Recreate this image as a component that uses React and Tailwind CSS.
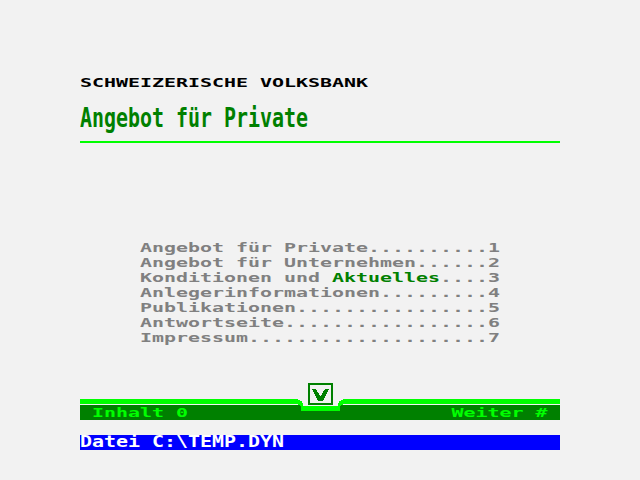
import React from "react";

const menu = [
  ["Angebot für Private..........1"],
  ["Angebot für Unternehmen......2"],
  ["Konditionen und ", "Aktuelles", "....3"],
  ["Anlegerinformationen.........4"],
  ["Publikationen................5"],
  ["Antwortseite.................6"],
  ["Impressum....................7"],
];

function Notch() {
  return (
    <svg
      className="absolute left-[216px] top-[-8px]"
      width="50"
      height="32"
      viewBox="0 0 50 32"
      shapeRendering="crispEdges"
    >
      <rect x="2" y="17" width="45" height="6" fill="#f2f2f2" />
      <rect x="6" y="23" width="37" height="1" fill="#f2f2f2" />
      <polygon
        fill="#00ff00"
        points="0,17 2,17 2,18 4,18 4,19 6,19 6,21 7,21 7,24 42,24 42,21 43,21 43,19 45,19 45,18 47,18 47,17 50,17 50,22 47,22 47,23 45,23 45,24 44,24 44,29 5,29 5,24 4,24 4,23 2,23 2,22 0,22"
      />
      <rect x="13" y="2" width="23" height="20" fill="#f2f2f2" stroke="#008000" strokeWidth="2" />
      <polygon fill="#008000" points="16,7 20,7 24.5,14.5 29,7 33,7 27,19 22,19" />
    </svg>
  );
}

export default function App() {
  return (
    <div className="w-[640px] h-[480px] bg-[#f2f2f2] overflow-hidden font-['DejaVu_Sans_Mono',monospace]">
      <div className="mx-[80px] w-[480px] flex flex-col pt-[75px]">
        <div className="h-[15px] text-[13px] leading-[15px] font-bold text-black whitespace-pre">
          <span className="block origin-left scale-x-[1.533]">SCHWEIZERISCHE VOLKSBANK</span>
        </div>
        <div className="h-[15px]" />
        <div className="h-[30px] text-[27px] leading-[25px] font-bold text-[#008000] whitespace-pre">
          <span className="block origin-left scale-x-[0.738]">Angebot für Private</span>
        </div>
        <div className="h-[6px]" />
        <div className="h-[2px] bg-[#00ff00]" />
        <div className="h-[97px]" />
        <div className="flex flex-col pl-[60px]">
          {menu.map((parts, i) => (
            <div key={i} className="h-[15px] text-[13px] leading-[15px] font-bold text-[#808080] whitespace-pre">
              <span className="block origin-left scale-x-[1.533]">
                {parts.length === 1 ? (
                  parts[0]
                ) : (
                  <>
                    {parts[0]}
                    <span className="text-[#008000]">{parts[1]}</span>
                    {parts[2]}
                  </>
                )}
              </span>
            </div>
          ))}
        </div>
        <div className="h-[45px]" />
        <div className="relative h-[30px] flex flex-col">
          <div className="h-[9px]" />
          <div className="h-[5px] bg-[#00ff00]" />
          <div className="h-[1px]" />
          <div className="h-[15px] bg-[#008000] flex justify-between text-[13px] leading-[15px] font-bold text-[#00ff00] whitespace-pre pl-[12px] pr-[12px]">
            <span className="block origin-left scale-x-[1.533]">Inhalt 0</span>
            <span className="block origin-right scale-x-[1.533]">Weiter #</span>
          </div>
          <Notch />
        </div>
        <div className="h-[15px]" />
        <div className="h-[15px] bg-[#0000ff] text-[15px] leading-[15px] font-bold text-white whitespace-pre">
          <span className="block origin-left scale-x-[1.329]">Datei C:\TEMP.DYN</span>
        </div>
      </div>
    </div>
  );
}
